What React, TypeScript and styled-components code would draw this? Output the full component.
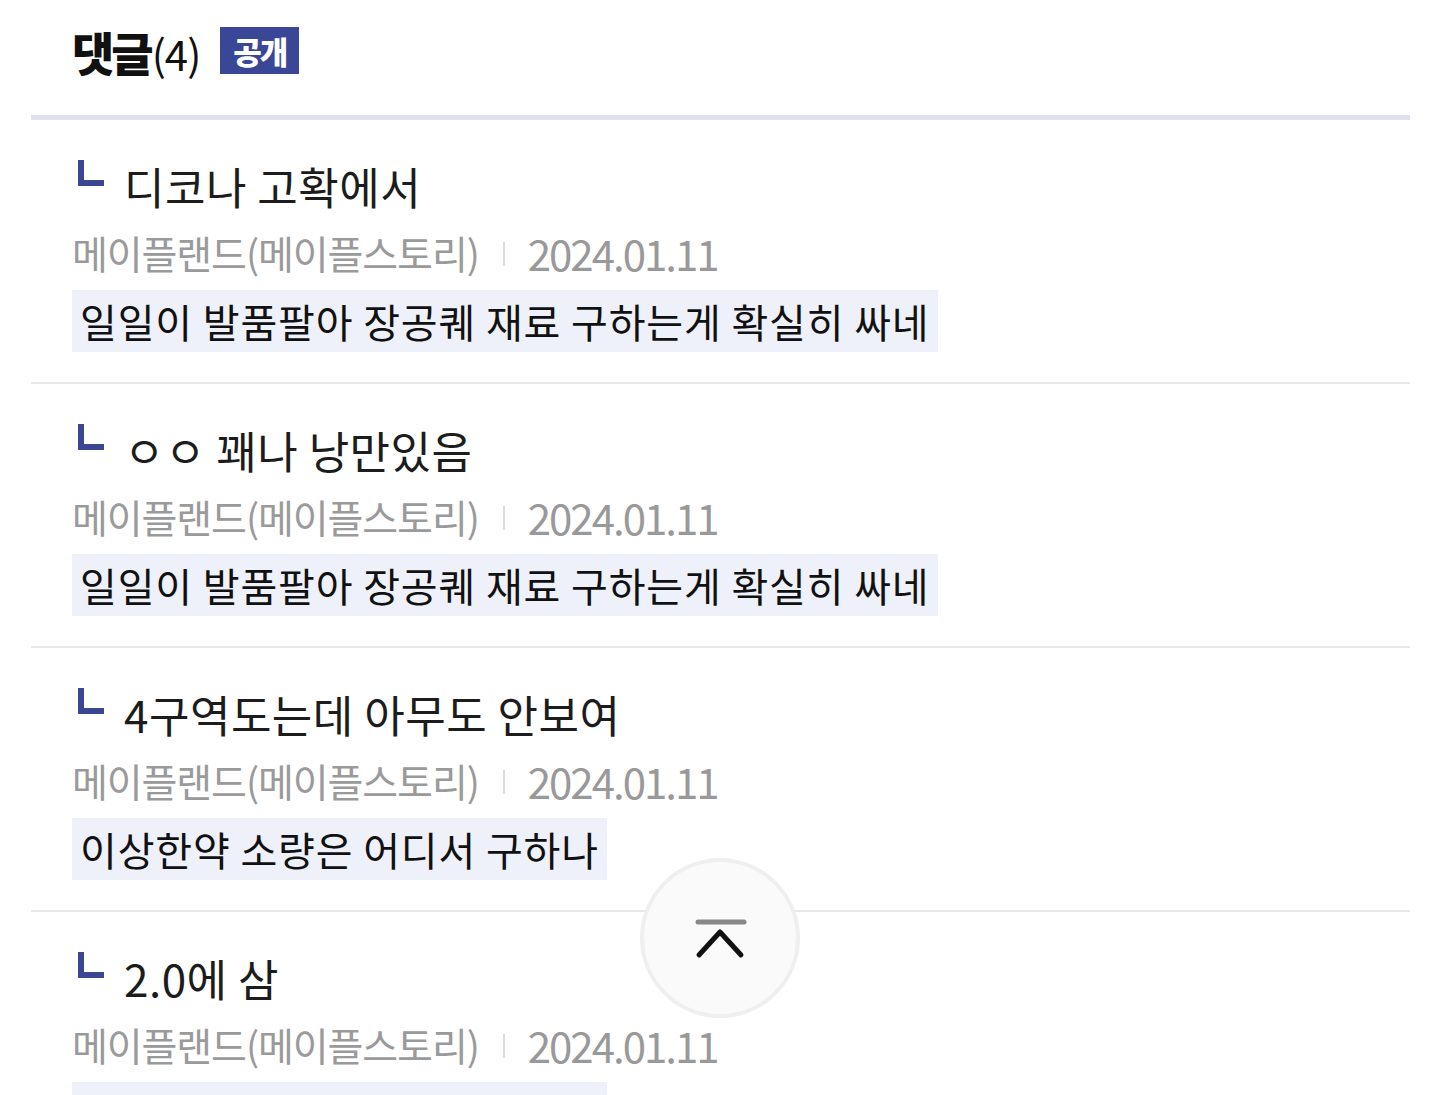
import React from "react";
import styled, { createGlobalStyle } from "styled-components";

const Global = createGlobalStyle`
  html, body { margin: 0; padding: 0; background: #ffffff; }
  body { font-family: "Noto Sans CJK KR", "Noto Sans", sans-serif; color: #1a1a1a; }
`;

const Page = styled.div`
  padding: 0 30px 0 31px;
`;

const Header = styled.header`
  display: flex;
  align-items: center;
  height: 120px;
  padding-left: 41px;
  padding-bottom: 14px;
  box-sizing: border-box;
  border-bottom: 5px solid #dfe1ee;
`;

const Title = styled.h2`
  margin: 0;
  display: flex;
  align-items: baseline;
  font-size: 46px;
  line-height: 1;
  font-weight: 900;
  letter-spacing: -3px;
  color: #111;
`;

const Count = styled.span`
  font-weight: 400;
  font-size: 42px;
  letter-spacing: -1px;
  margin-left: 1px;
`;

const Badge = styled.span`
  display: inline-flex;
  align-items: center;
  justify-content: center;
  margin-left: 20px;
  width: 79px;
  height: 47px;
  background: #3a4796;
  color: #ffffff;
  font-size: 31px;
  font-weight: 900;
  letter-spacing: -2px;
`;

const List = styled.ul`
  list-style: none;
  margin: 0;
  padding: 0;
`;

const Item = styled.li`
  display: flex;
  flex-direction: column;
  align-items: flex-start;
  padding: 40px 0 30px 41px;
  border-bottom: 2px solid #e8e8ea;
`;

const Reply = styled.div`
  display: flex;
  align-items: center;
  height: 52px;
`;

const Marker = styled.span`
  display: block;
  width: 20px;
  height: 20px;
  margin: 0 20px 26px 6px;
  border-left: 6px solid #3b4791;
  border-bottom: 6px solid #3b4791;
`;

const ReplyText = styled.span`
  font-size: 44px;
  line-height: 52px;
  color: #1c1c1c;
  letter-spacing: 0.5px;
`;

const Meta = styled.div`
  display: flex;
  align-items: center;
  height: 52px;
  margin-top: 14px;
  color: #9a9a9a;
`;

const Author = styled.span`
  font-size: 39px;
  letter-spacing: -1.1px;
`;

const Sep = styled.span`
  display: block;
  width: 2px;
  height: 24px;
  background: #dcdcdc;
  margin: 4px 23px 0 24px;
`;

const Date = styled.span`
  font-size: 42px;
  letter-spacing: -2px;
  color: #999999;
`;

const Quote = styled.div`
  margin-top: 12px;
  height: 62px;
  display: flex;
  align-items: center;
  padding: 0 8px;
  background: #eef0fa;
  font-size: 40px;
  color: #111;
  letter-spacing: 0.85px;
`;

const TopButton = styled.button`
  position: fixed;
  left: 640px;
  top: 858px;
  width: 160px;
  height: 160px;
  border-radius: 50%;
  border: 4px solid #efefef;
  background: #fafafa;
  display: flex;
  align-items: center;
  justify-content: center;
  padding: 0;
  cursor: pointer;
  box-sizing: border-box;
`;

const comments = [
  { reply: "디코나 고확에서", quote: "일일이 발품팔아 장공퀘 재료 구하는게 확실히 싸네" },
  { reply: "ㅇㅇ 꽤나 낭만있음", quote: "일일이 발품팔아 장공퀘 재료 구하는게 확실히 싸네" },
  { reply: "4구역도는데 아무도 안보여", quote: "이상한약 소량은 어디서 구하나" },
  { reply: "2.0에 삼", quote: "이상한약 소량은 어디서 구하나" },
];

export default function App() {
  return (
    <Page>
      <Global />
      <Header>
        <Title>
          댓글<Count>(4)</Count>
        </Title>
        <Badge>공개</Badge>
      </Header>
      <List>
        {comments.map((c, i) => (
          <Item key={i}>
            <Reply>
              <Marker />
              <ReplyText>{c.reply}</ReplyText>
            </Reply>
            <Meta>
              <Author>메이플랜드(메이플스토리)</Author>
              <Sep />
              <Date>2024.01.11</Date>
            </Meta>
            <Quote>{c.quote}</Quote>
          </Item>
        ))}
      </List>
      <TopButton aria-label="맨 위로">
        <svg width="60" height="44" viewBox="0 0 60 44" fill="none">
          <line x1="8" y1="6" x2="54" y2="6" stroke="#888" strokeWidth="5" strokeLinecap="round" />
          <polyline points="9,39 30,16 51,39" stroke="#111" strokeWidth="5" strokeLinecap="round" strokeLinejoin="round" />
        </svg>
      </TopButton>
    </Page>
  );
}
